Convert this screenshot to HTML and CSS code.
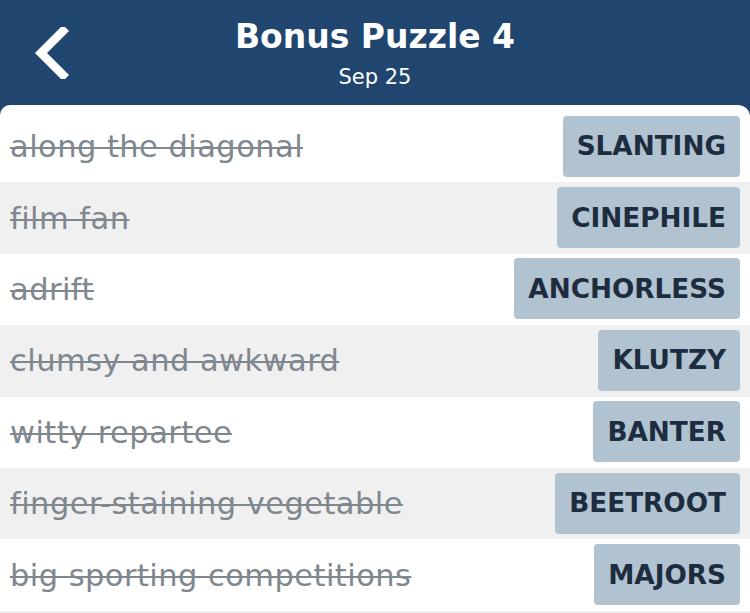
FILE: index.html
```html
<!DOCTYPE html>
<html>
<head>
<meta charset="utf-8">
<link rel="stylesheet" href="styles.css">
</head>
<body>
<div class="app">
  <header class="header">
    <div class="back">
      <svg width="36" height="52" viewBox="0 0 36 52"><polyline points="29,4 7,26 29,48" fill="none" stroke="#ffffff" stroke-width="8.5" stroke-linecap="square" stroke-linejoin="miter"/></svg>
    </div>
    <div class="titles">
      <div class="title">Bonus Puzzle 4</div>
      <div class="subtitle">Sep 25</div>
    </div>
  </header>
  <main class="card">
    <div class="row"><span class="clue">along the diagonal</span><span class="answer">SLANTING</span></div>
    <div class="row alt"><span class="clue">film fan</span><span class="answer">CINEPHILE</span></div>
    <div class="row"><span class="clue">adrift</span><span class="answer">ANCHORLESS</span></div>
    <div class="row alt"><span class="clue">clumsy and awkward</span><span class="answer">KLUTZY</span></div>
    <div class="row"><span class="clue">witty repartee</span><span class="answer">BANTER</span></div>
    <div class="row alt"><span class="clue">finger-staining vegetable</span><span class="answer">BEETROOT</span></div>
    <div class="row"><span class="clue">big sporting competitions</span><span class="answer">MAJORS</span></div>
    <div class="row alt"></div>
  </main>
</div>
</body>
</html>
```
FILE: styles.css
```css
* { box-sizing: border-box; }
html, body { margin: 0; padding: 0; }
body {
  width: 750px;
  height: 613px;
  overflow: hidden;
  background: #20456f;
  font-family: "DejaVu Sans", "Open Sans", sans-serif;
}
.app { display: flex; flex-direction: column; height: 613px; }
.header {
  height: 105px;
  flex: none;
  display: flex;
  align-items: center;
  justify-content: center;
  position: relative;
  color: #ffffff;
}
.back {
  position: absolute;
  left: 34px;
  top: 27px;
  width: 36px;
  height: 52px;
}
.back svg { display: block; }
.titles { display: flex; flex-direction: column; align-items: center; margin-top: 1px; }
.title { font-size: 33px; font-weight: 700; line-height: 40px; }
.subtitle { font-size: 21px; line-height: 26px; margin-top: 7px; }
.card {
  flex: 1;
  background: #ffffff;
  border-radius: 10px 12px 0 0;
  padding-top: 6px;
  overflow: hidden;
}
.row {
  height: 71.4px;
  display: flex;
  align-items: center;
  justify-content: space-between;
  padding: 0 10px;
}
.row.alt { background: #f0f0f0; }
.clue {
  font-size: 30.5px;
  letter-spacing: 0.45px;
  color: #7f878f;
  text-decoration: line-through;
  text-decoration-thickness: 2px;
}
.answer {
  height: 61px;
  display: flex;
  align-items: center;
  padding: 0 14px;
  background: #b1c2d0;
  border-radius: 4px;
  color: #1d2d3f;
  font-size: 26.3px;
  font-weight: 700;
  margin-top: -1px;
}
```
